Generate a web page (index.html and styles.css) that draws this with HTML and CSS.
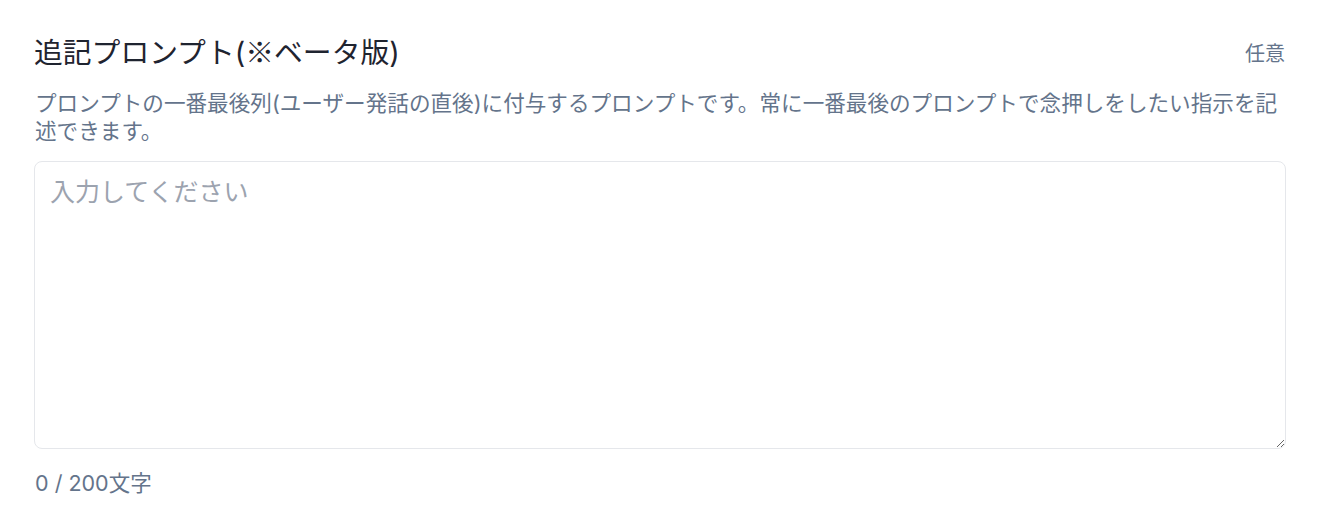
FILE: index.html
```html
<!DOCTYPE html>
<html lang="ja">
<head>
    <meta charset="UTF-8">
    <meta name="viewport" content="width=device-width, initial-scale=1.0">
    <title>追記プロンプト</title>
    <link rel="stylesheet" href="styles.css">
</head>
<body>

    <div class="field">
        <div class="field-header">
            <label for="appendPrompt" class="field-label">追記プロンプト(<span class="cjk">※</span>ベータ版)</label>
            <span class="field-optional">任意</span>
        </div>
        <p class="field-help">プロンプトの一番最後列(ユーザー発話の直後)に付与するプロンプトです。常に一番最後のプロンプトで念押しをしたい指示を記述できます。</p>
        <textarea id="appendPrompt" class="field-input" placeholder="入力してください" maxlength="200"></textarea>
        <div class="field-count"><span id="charCount">0</span> / 200文字</div>
    </div>

    <script>
        const input = document.getElementById('appendPrompt');
        input.addEventListener('input', () => {
            document.getElementById('charCount').innerText = input.value.length;
        });
    </script>
</body>
</html>
```

FILE: styles.css
```css
body {
    font-family: Inter, "Noto Sans CJK JP", sans-serif;
    background-color: #ffffff;
    margin: 0;
    padding: 34px 34px 0 34px;
}
.cjk {
    font-family: "Noto Sans CJK JP", sans-serif;
}
.field {
    display: flex;
    flex-direction: column;
}
.field-header {
    display: flex;
    justify-content: space-between;
    align-items: center;
    height: 36px;
}
.field-label {
    font-size: 28.8px;
    line-height: 36px;
    color: #1f2430;
}
.field-optional {
    font-size: 20px;
    color: #64748b;
    padding-right: 1px;
}
.field-help {
    margin: 19px 0 16px 0;
    font-size: 21.6px;
    line-height: 28px;
    color: #64748b;
    padding-left: 1px;
}
.field-input {
    box-sizing: border-box;
    width: 100%;
    height: 288px;
    padding: 14px 15px;
    border: 1px solid #e5e7eb;
    border-radius: 8px;
    font-family: inherit;
    font-size: 25px;
    line-height: 32px;
    color: #1f2430;
    resize: vertical;
    outline: none;
}
.field-input::placeholder {
    color: #9ca3af;
}
.field-count {
    margin-top: 20px;
    font-size: 21.5px;
    line-height: 28px;
    color: #64748b;
    padding-left: 1px;
}
```
